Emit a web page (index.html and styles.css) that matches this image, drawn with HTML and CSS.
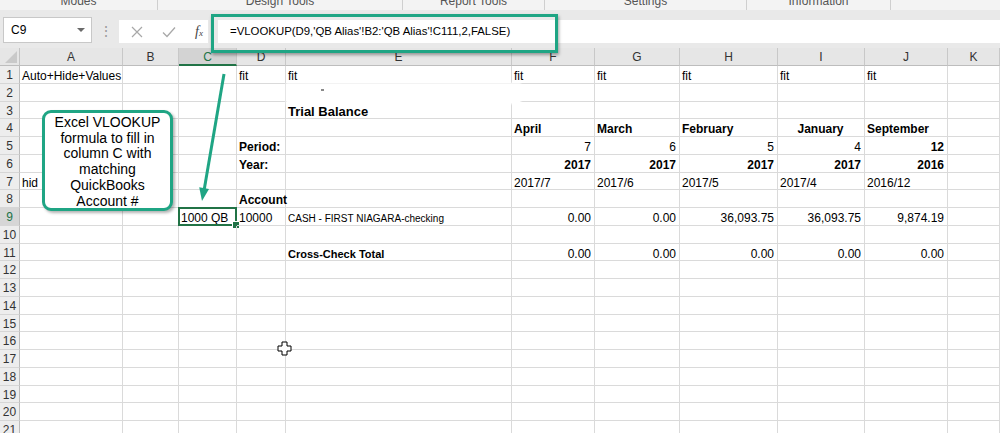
FILE: index.html
```html
<!DOCTYPE html>
<html lang="en">
<head>
    <meta charset="UTF-8">
    <title>Trial Balance - VLOOKUP</title>
    <link rel="stylesheet" href="styles.css">
</head>
<body>
    <div class="ribbon">
        <div class="ribbon-group g-modes">Modes</div>
        <div class="ribbon-group g-design">Design Tools</div>
        <div class="ribbon-group g-report">Report Tools</div>
        <div class="ribbon-group g-settings">Settings</div>
        <div class="ribbon-group g-info">Information</div>
        <div class="ribbon-group g-rest"></div>
    </div>

    <div class="formula-band">
        <div class="name-box">C9<span class="caret"></span></div>
        <div class="grip">&#8942;</div>
        <div class="fx-buttons">
            <svg class="fx-icon" width="12" height="12" viewBox="0 0 12 12"><path d="M1 1 L11 11 M11 1 L1 11" stroke="#a8a8a8" stroke-width="1.2" fill="none"/></svg>
            <svg class="fx-icon" width="14" height="12" viewBox="0 0 14 12"><path d="M1 6.5 L5 10.5 L13 1.5" stroke="#a8a8a8" stroke-width="1.3" fill="none"/></svg>
            <span class="fx-label">f<sub>x</sub></span>
        </div>
        <div class="formula-input">=VLOOKUP(D9,'QB Alias'!B2:'QB Alias'!C111,2,FALSE)</div>
    </div>

    <div class="sheet" id="sheet"></div>

    <!-- annotation layer over the sheet -->
    <div class="erase-patch"></div>
    <div class="stray-dot"></div>
    <div class="formula-highlight"></div>
    <div class="callout">Excel VLOOKUP<br>formula to fill in<br>column C with<br>matching<br>QuickBooks<br>Account #</div>
    <svg class="arrow" width="1000" height="433" viewBox="0 0 1000 433">
        <line x1="224" y1="74" x2="204.3" y2="189" stroke="#1fa584" stroke-width="3"/>
        <polygon points="202,201 209,189 199.2,187.3" fill="#1fa584"/>
    </svg>
    <svg class="cursor" width="15" height="15" viewBox="0 0 15 15">
        <path d="M5 1 H10 V5 H14 V10 H10 V14 H5 V10 H1 V5 H5 Z" fill="#fff" stroke="#000" stroke-width="1"/>
    </svg>

    <script>
        const letters = ["A", "B", "C", "D", "E", "F", "G", "H", "I", "J", "K"];
        const rowCount = 21;

        // cell text and classes: r = right, b = bold, c = center
        const cells = {
            A1: ["Auto+Hide+Values"],
            D1: ["fit"], E1: ["fit"], F1: ["fit"], G1: ["fit"], H1: ["fit"], I1: ["fit"], J1: ["fit"],
            E3: ["Trial Balance", "title"],
            F4: ["April", "b"], G4: ["March", "b"], H4: ["February", "b"], I4: ["January", "b c"], J4: ["September", "b"],
            D5: ["Period:", "b"], F5: ["7", "r"], G5: ["6", "r"], H5: ["5", "r"], I5: ["4", "r"], J5: ["12", "r b"],
            D6: ["Year:", "b"], F6: ["2017", "r b"], G6: ["2017", "r b"], H6: ["2017", "r b"], I6: ["2017", "r b"], J6: ["2016", "r b"],
            A7: ["hid"], F7: ["2017/7"], G7: ["2017/6"], H7: ["2017/5"], I7: ["2017/4"], J7: ["2016/12"],
            D8: ["Account", "b"],
            C9: ["1000 QB", "sel"], D9: ["10000"], E9: ["CASH - FIRST NIAGARA-checking", "small"],
            F9: ["0.00", "r"], G9: ["0.00", "r"], H9: ["36,093.75", "r"], I9: ["36,093.75", "r"], J9: ["9,874.19", "r"],
            E11: ["Cross-Check Total", "total"],
            F11: ["0.00", "r"], G11: ["0.00", "r"], H11: ["0.00", "r"], I11: ["0.00", "r"], J11: ["0.00", "r"]
        };

        const sheet = document.getElementById("sheet");

        function addDiv(className, text) {
            const div = document.createElement("div");
            div.className = className;
            if (text) div.textContent = text;
            sheet.appendChild(div);
        }

        addDiv("corner");
        letters.forEach((l) => addDiv(l === "C" ? "col-head active" : "col-head", l));

        for (let r = 1; r <= rowCount; r++) {
            addDiv(r === 9 ? "row-head active" : "row-head", String(r));
            letters.forEach((l) => {
                const entry = cells[l + r];
                addDiv(entry ? "cell " + (entry[1] || "") : "cell", entry ? entry[0] : "");
            });
        }
    </script>
</body>
</html>
```

FILE: styles.css
```css
* {
    box-sizing: border-box;
}

body {
    margin: 0;
    width: 1000px;
    height: 433px;
    overflow: hidden;
    position: relative;
    background: #fff;
    color: #000;
    font-family: "Liberation Sans", Arial, sans-serif;
    font-size: 12px;
}

/* bottom of the ribbon, cut off by the screenshot */
.ribbon {
    display: flex;
    height: 10px;
    background: #f3f3f3;
    overflow: hidden;
}

.ribbon-group {
    height: 16px;
    margin-top: -6px;
    border-right: 1px solid #cfcfcf;
    text-align: center;
    font-size: 12px;
    line-height: 14px;
    color: #555;
}

.g-modes { width: 158px; }
.g-design { width: 245px; }
.g-report { width: 142px; }
.g-settings { width: 202px; }
.g-info { width: 144px; }
.g-rest { flex: 1; border-right: none; }

/* name box + formula bar */
.formula-band {
    display: flex;
    align-items: flex-end;
    height: 38px;
    padding: 0 0 5px 3px;
    background: #e9e9e9;
}

.name-box {
    display: flex;
    align-items: center;
    justify-content: space-between;
    width: 89px;
    height: 26px;
    padding: 0 6px 0 7px;
    background: #fff;
    border: 1px solid #c8c8c8;
    font-size: 12px;
}

.caret {
    border-left: 4px solid transparent;
    border-right: 4px solid transparent;
    border-top: 4px solid #6a6a6a;
}

.grip {
    width: 27px;
    height: 23px;
    line-height: 23px;
    text-align: center;
    color: #9a9a9a;
    font-size: 14px;
}

.fx-buttons {
    display: flex;
    align-items: center;
    width: 89px;
    height: 23px;
    padding-left: 12px;
    background: #fff;
}

.fx-icon {
    margin-right: 19px;
}

.fx-label {
    font-family: "Liberation Serif", serif;
    font-style: italic;
    font-size: 14px;
    color: #444;
}

.fx-label sub {
    font-size: 9px;
    vertical-align: 0;
}

.formula-input {
    flex: 1;
    height: 23px;
    margin-left: 10px;
    padding-left: 12px;
    line-height: 23px;
    background: #fff;
    font-size: 11.4px;
    white-space: nowrap;
}

/* the worksheet */
.sheet {
    display: grid;
    grid-template-columns: 20px 103px 56px 58px 49px 226px 83px 85px 98px 87px 83px 52px;
    grid-template-rows: 18px;
    grid-auto-rows: 17.75px;
}

.corner {
    position: relative;
    background: #e6e6e6;
    border-right: 1px solid #c4c4c4;
    border-bottom: 1px solid #bdbdbd;
}

.corner::after {
    content: "";
    position: absolute;
    right: 2px;
    bottom: 2px;
    border-left: 12px solid transparent;
    border-bottom: 12px solid #c9c9c9;
}

.col-head {
    background: #e6e6e6;
    border-right: 1px solid #c8c8c8;
    border-bottom: 1px solid #bdbdbd;
    text-align: center;
    line-height: 19px;
    color: #333;
}

.col-head.active {
    background: #d3d3d3;
    border-bottom: 2px solid #217346;
    color: #217346;
}

.row-head {
    background: #ededed;
    border-right: 1px solid #bcbcbc;
    border-bottom: 1px solid #d6d6d6;
    text-align: center;
    padding-top: 1px;
    line-height: 17px;
    color: #333;
}

.row-head.active {
    background: #d6d6d6;
    color: #217346;
}

.cell {
    position: relative;
    padding: 2px 3px 0 2px;
    border-right: 1px solid #dadada;
    border-bottom: 1px solid #dadada;
    line-height: 17px;
    white-space: nowrap;
}

.cell.r { text-align: right; }
.cell.c { text-align: center; }
.cell.b { font-weight: bold; }

.cell.title {
    padding-top: 1px;
    font-size: 13px;
    font-weight: bold;
}

.cell.small {
    font-size: 10px;
}

.cell.total {
    font-size: 11px;
    font-weight: bold;
}

.cell.sel::before {
    content: "";
    position: absolute;
    left: -1px;
    top: -1px;
    right: -1px;
    bottom: -1px;
    border: 2px solid #217346;
}

.cell.sel::after {
    content: "";
    position: absolute;
    right: -4px;
    bottom: -4px;
    width: 6px;
    height: 6px;
    background: #217346;
    border: 1px solid #fff;
}

/* annotations */
.erase-patch {
    position: absolute;
    left: 287px;
    top: 84px;
    width: 233px;
    height: 19px;
    background: #fff;
    box-shadow: 0 0 2px 1px #fff;
}

.stray-dot {
    position: absolute;
    left: 321px;
    top: 89px;
    width: 3px;
    height: 2px;
    background: #8a8a8a;
}

.formula-highlight {
    position: absolute;
    left: 211px;
    top: 14px;
    width: 347px;
    height: 39px;
    border: 3px solid #1fa584;
    box-shadow: 1px 2px 3px rgba(0, 0, 0, 0.35);
}

.callout {
    position: absolute;
    left: 42px;
    top: 110px;
    width: 131px;
    height: 101px;
    padding-top: 2px;
    border: 3px solid #1fa584;
    border-radius: 9px;
    background: #fff;
    box-shadow: 2px 2px 3px rgba(0, 0, 0, 0.3);
    text-align: center;
    font-size: 14px;
    line-height: 15.7px;
}

.arrow {
    position: absolute;
    left: 0;
    top: 0;
    pointer-events: none;
}

.cursor {
    position: absolute;
    left: 277px;
    top: 341px;
}
```
